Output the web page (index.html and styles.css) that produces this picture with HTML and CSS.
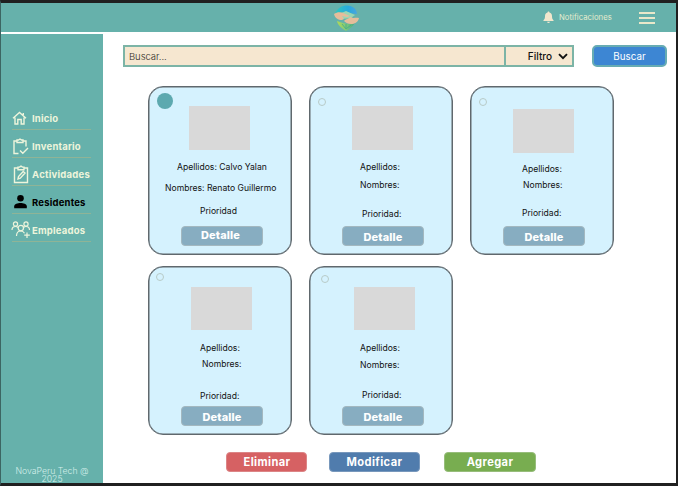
FILE: index.html
```html
<!DOCTYPE html>
<html lang="es">
<head>
<meta charset="utf-8">
<title>Residentes</title>
<link rel="stylesheet" href="styles.css">
</head>
<body>
<div class="app">
  <header class="topbar">
    <svg class="logo" viewBox="0 0 28 28">
      <defs>
        <linearGradient id="sky" x1="0" x2="1"><stop offset="0" stop-color="#30c8bd"/><stop offset=".6" stop-color="#27a9dc"/><stop offset="1" stop-color="#4aa5df"/></linearGradient>
        <linearGradient id="leaf" x1="0" x2="1"><stop offset="0" stop-color="#b1d958"/><stop offset=".5" stop-color="#7fca78"/><stop offset="1" stop-color="#43a987"/></linearGradient>
      </defs>
      <path fill="url(#sky)" d="M2 10C4 4 9 1.500 14 1.500c6 0 10 4 10 8.500-4 0-6-1-9-1-5-2-9-1-13 1z"/>
      <path fill="#9bd6b4" d="M6 10l7-3 9 4-4 3-9 1z"/>
      <path fill="url(#leaf)" d="M4 17l6 2 5 1 7-1c-2 3-4 5-9 8-4-3-8-5-9-10z"/>
      <path fill="#e5bd9b" d="M1 10c3-2 6-2 9-1l7 3-3 1-5-1 2 3-2 1c-4 0-7-2-8-6zM12 16l6-3c3 2 4 0 8 1-1 4-4 6-8 6-3 0-5-1-7-3z"/>
      <path fill="none" stroke="#42a98b" stroke-width=".8" d="M9 20l4 5 5-4M13 20v4"/>
    </svg>
    <div class="notice">
      <svg class="bell" viewBox="0 0 12 13"><path d="M6 .3c-.7 0-1 .5-1 1.100C3.100 1.900 2.200 3.400 2.200 5c0 2.500-.6 3.600-1.700 4.700v.9h11v-.9C10.400 8.600 9.800 7.500 9.800 5c0-1.600-.9-3.100-2.800-3.600 0-.6-.3-1.100-1-1.100zM4.500 11.300a1.500 1.500 0 0 0 3 0z"/></svg>
      <span>Notificaciones</span>
    </div>
    <div class="burger"><i></i><i></i><i></i></div>
  </header>
  <div class="body">
    <aside class="sidebar">
      <nav>
        <a class="item"><svg class="icon" viewBox="0 0 18 18"><path d="M2 9.300L8.500 3.500 15 9.300M4 8.500V15h2.800v-4.500h3.400V15H13V8.500M12.300 6V4"/></svg><span>Inicio</span></a>
        <a class="item"><svg class="icon tall" viewBox="0 0 18 18"><path d="M7.500 16H3V3.500h3M12 3.500h3V9M6 2.500h1.500l1.500-1 1.500 1H12V5H6zM9 13l2.800 2.800L17 10.500"/></svg><span>Inventario</span></a>
        <a class="item"><svg class="icon tall" viewBox="0 0 18 18"><path d="M7 2.500H3.500v14.500h13V2.500H13M7 1.600h1.500L10 .6l1.500 1H13V4.300H7zM7 13.500l.5-2.500 4.700-5 1.800 1.500-4.700 5.200z"/></svg><span class="wide">Actividades</span></a>
        <a class="item active"><svg class="icon solid" viewBox="0 0 18 18"><circle cx="9.500" cy="5.300" r="3.300"/><path d="M3.200 15.300v-2c0-2.200 3.500-3.300 6.300-3.300s6.300 1.100 6.300 3.300v2z"/></svg><span>Residentes</span></a>
        <a class="item"><svg class="icon crowd" viewBox="0 0 20 18"><circle cx="4.500" cy="3" r="2.100"/><circle cx="15" cy="3" r="2.100"/><circle cx="9.800" cy="7.100" r="2.700"/><path d="M1 9c0-2.500 1.500-3.500 3.500-3.500 1 0 2 .5 2.500 1M18.500 9c0-2.500-1.500-3.500-3.500-3.500-1 0-2 .5-2.500 1M5.500 15c0-3 1.800-5 4.300-5 1.800 0 3 .8 3.700 2.300M16 11.500v5.500M13.200 14.200h5.600"/></svg><span>Empleados</span></a>
      </nav>
      <footer>NovaPeru Tech @<br>2025</footer>
    </aside>
    <main>
      <div class="tools">
        <div class="search"><span class="query">Buscar...</span><span class="filter"><span>Filtro</span><svg viewBox="0 0 10 7"><path d="M1 1.200l4 4 4-4"/></svg></span></div>
        <button class="find">Buscar</button>
      </div>
      <section class="cards">
        <article class="card c1"><i class="mark on"></i><div class="photo"></div><p class="ap">Apellidos: Calvo Yalan</p><p class="no">Nombres: Renato Guillermo</p><p class="pr">Prioridad</p><button class="detail">Detalle</button></article>
        <article class="card c2"><i class="mark"></i><div class="photo"></div><p class="ap">Apellidos:</p><p class="no">Nombres:</p><p class="pr">Prioridad:</p><button class="detail">Detalle</button></article>
        <article class="card c3"><i class="mark"></i><div class="photo"></div><p class="ap">Apellidos:</p><p class="no">Nombres:</p><p class="pr">Prioridad:</p><button class="detail">Detalle</button></article>
        <article class="card c4"><i class="mark"></i><div class="photo"></div><p class="ap">Apellidos:</p><p class="no">Nombres:</p><p class="pr">Prioridad:</p><button class="detail">Detalle</button></article>
        <article class="card c5"><i class="mark"></i><div class="photo"></div><p class="ap">Apellidos:</p><p class="no">Nombres:</p><p class="pr">Prioridad:</p><button class="detail">Detalle</button></article>
      </section>
      <div class="actions">
        <button class="del">Eliminar</button>
        <button class="mod">Modificar</button>
        <button class="add">Agregar</button>
      </div>
    </main>
  </div>
</div>
</body>
</html>
```
FILE: styles.css
```css
* { box-sizing: border-box; }
body { margin: 0; font-family: Inter, "Liberation Sans", sans-serif; }
button { font-family: inherit; padding: 0; margin: 0; }
p { margin: 0; }
.app { width: 678px; height: 486px; border: solid #202020; border-width: 3px 2px 3px 1px; border-left-color: #3c6562; background: #fff; display: flex; flex-direction: column; overflow: hidden; }
.topbar { height: 29px; flex: none; background: #66b1ab; display: flex; align-items: center; padding-right: 21px; }
.logo { width: 28px; height: 28px; margin-left: 332px; }
.notice { margin-left: 182px; display: flex; align-items: center; gap: 5px; color: #e6edcf; font-size: 7.700px; width: 91px; flex: none; letter-spacing: .04px; white-space: nowrap; padding-top: 0; }
.notice span { position: relative; top: -.5px; }
.bell { width: 11px; height: 12.500px; fill: #f3e7cd; flex: none; }
.burger { width: 16px; margin-left: auto; display: flex; flex-direction: column; gap: 3.500px; padding-top: 1px; }
.burger i { height: 1.500px; background: #e9e8ca; }
.body { flex: 1; display: flex; padding-top: 2px; min-height: 0; }
.sidebar { width: 102px; flex: none; background: #66b1ab; display: flex; flex-direction: column; padding-top: 68px; }
nav { padding: 0 12px 0 11px; }
.item { height: 28px; display: flex; align-items: center; border-bottom: 1px solid #8fb497; padding-top: 5px; font-size: 9.500px; letter-spacing: .2px; font-weight: 700; color: #eef5dc; white-space: nowrap; }
.item .wide { letter-spacing: .26px; }
.item .icon { width: 18px; height: 18px; flex: none; margin-right: 3px; margin-left: -1px; fill: none; stroke: currentColor; stroke-width: 1.400; }
.item .icon.tall { height: 19px; }
.item .icon.crowd { width: 20px; margin-right: 1px; stroke-width: 1.200; }
.item .icon.solid { fill: currentColor; stroke: none; }
.item.active { color: #000; }
footer { margin-top: auto; text-align: center; font-size: 8.700px; line-height: 8.500px; font-weight: 300; color: #d4efea; height: 16.500px; }
main { flex: 1; padding: 11px 0 0 20px; }
.tools { display: flex; gap: 18px; height: 22px; }
.search { width: 451px; border: 2px solid #7cb4a6; background: #f6e7d0; display: flex; align-items: center; font-size: 9.500px; font-weight: 300; color: #2e2a25; padding-left: 4px; }
.search .query { flex: 1; letter-spacing: -.05px; }
.filter { width: 68px; height: 100%; border-left: 2px solid #7cb4a6; display: flex; align-items: center; justify-content: flex-end; gap: 6px; padding-right: 4px; color: #111; font-size: 10px; font-weight: 500; }
.filter svg { width: 10px; height: 7px; fill: none; stroke: #111; stroke-width: 1.900; }
.find { width: 75px; border: 2px solid #67acb3; border-radius: 5px; background: #3d86d3; color: #fff; font-size: 9.800px; }
.cards { display: grid; grid-template-columns: repeat(3, 144px); column-gap: 17px; row-gap: 11.500px; margin: 18.500px 0 0 25px; }
.card { position: relative; height: 169px; border: 1px solid #60686d; box-shadow: inset 0 0 0 .5px #60686d; border-radius: 15px; background: #d5f2fe; display: flex; flex-direction: column; align-items: flex-start; font-size: 8.600px; line-height: 12px; color: #111; white-space: nowrap; }
.mark { position: absolute; left: 8px; top: 11px; width: 8px; height: 8px; border: 1px solid #b8cbc8; border-radius: 50%; }
.mark.on { width: 16px; height: 16px; left: 8px; top: 6.500px; background: #5da9af; border: 0; }
.photo { width: 61px; height: 43.500px; background: #d9d9d9; margin: 19.500px 0 0 42px; flex: none; }
.ap { margin: 11.500px 0 0 50px; }
.no { margin: 5.500px 0 0 50px; }
.pr { margin: 17.500px 0 0 52px; }
.detail { width: 82px; height: 20px; margin: auto 0 8px 32px; border: 1px solid #a3b8c0; border-radius: 4px; background: #87adc1; color: #fff; font-size: 10.900px; letter-spacing: .2px; font-weight: 800; display: flex; align-items: center; justify-content: center; padding-top: 2px; }
.c1 .photo { margin-left: 40px; }
.c1 .ap { margin-left: 28px; }
.c1 .no { margin: 9px 0 0 16px; }
.c1 .pr { margin: 10.500px 0 0 51px; }
.c1 .detail { padding: 0 3px 1px 0; }
.c3 .photo { margin-top: 22.500px; }
.c3 .ap { margin: 10px 0 0 51px; }
.c3 .no { margin: 4px 0 0 52px; }
.c3 .pr { margin: 16px 0 0 51px; }
.c4 .ap { margin-left: 51px; }
.c4 .no { margin: 4px 0 0 53px; }
.c4 .pr { margin: 20px 0 0 51px; }
.c4 .mark { top: 6px; left: 7px; }
.c5 .mark { top: 8px; left: 11px; }
.c5 .photo { margin-left: 44px; }
.actions { display: flex; margin: 17px 0 0 103px; }
.actions button { height: 20px; border: 1px solid; border-radius: 4px; color: #fff; font-size: 11.100px; letter-spacing: .4px; font-weight: 700; padding-bottom: 1px; }
.actions .del { width: 81px; padding-left: 1px; background: #d66163; border-color: #dc8586; }
.actions .mod { width: 91px; margin-left: 22px; background: #507cad; border-color: #7898bc; }
.actions .add { width: 92px; margin-left: 24px; background: #78ad50; border-color: #97bd7b; }
```
